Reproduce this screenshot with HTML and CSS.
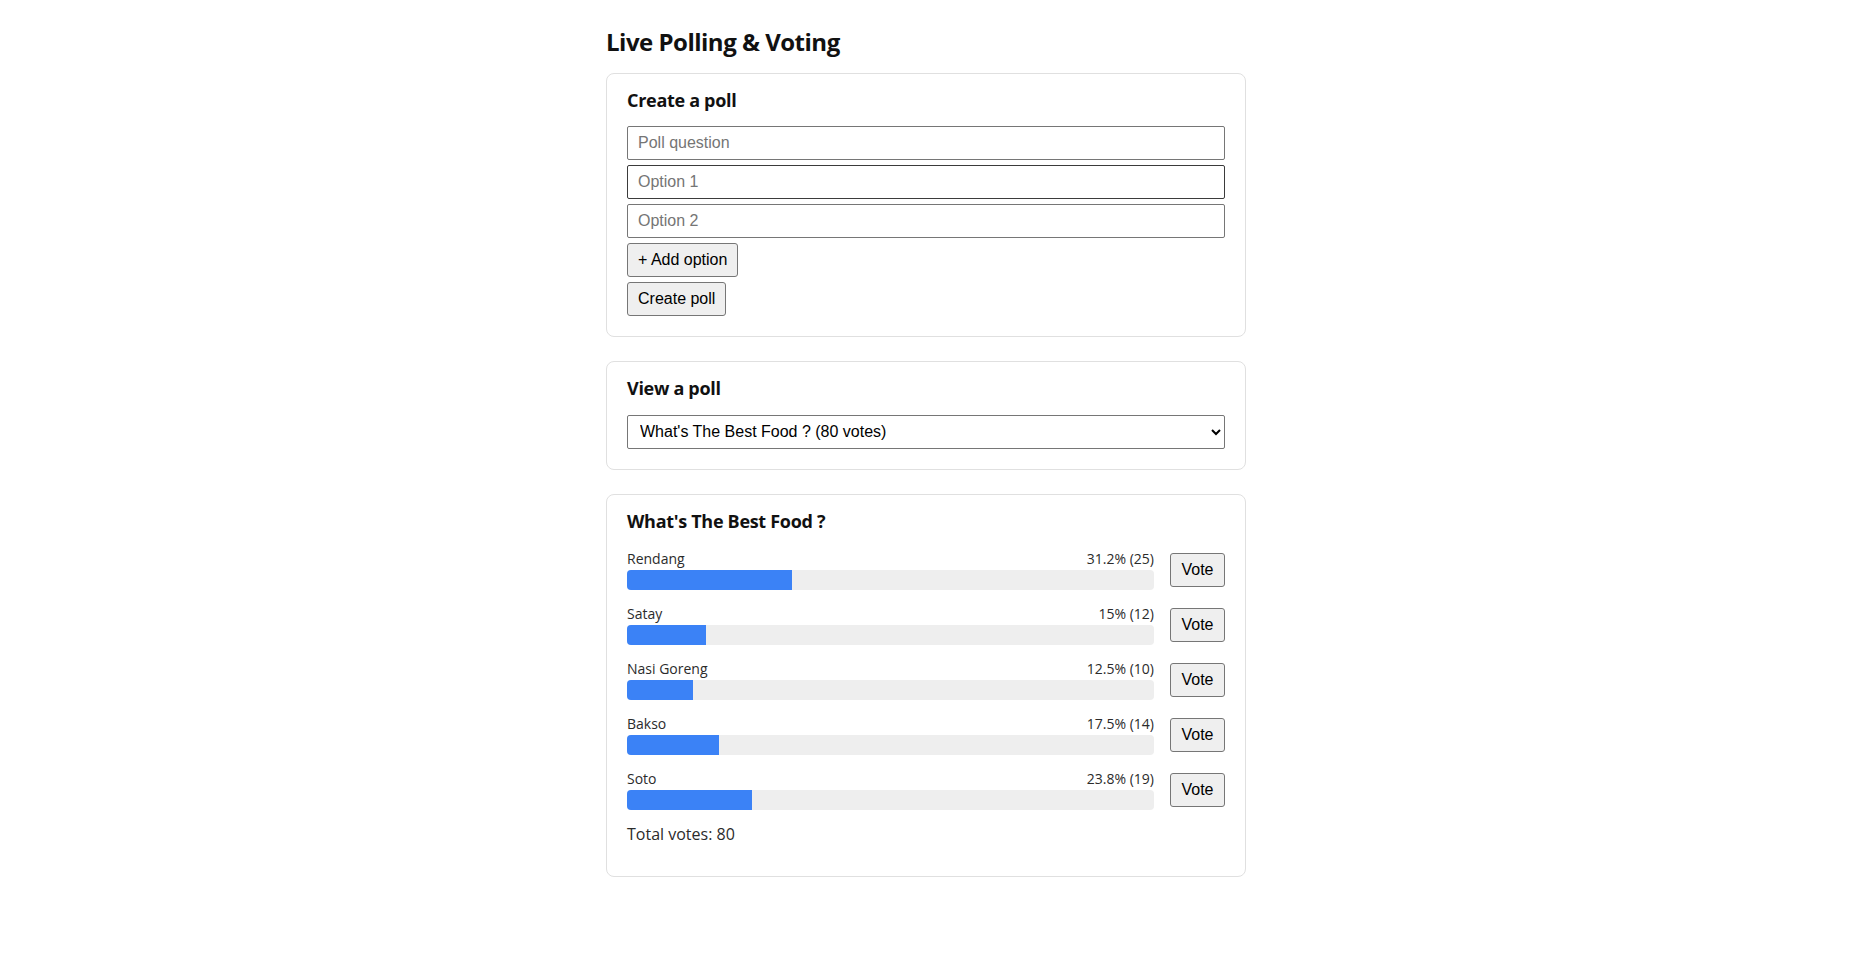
FILE: index.html
```html
<!DOCTYPE html>
<html lang="en">
<head>
<meta charset="utf-8">
<title>Live Polling &amp; Voting</title>
<link rel="stylesheet" href="styles.css">
</head>
<body>
<main class="app">
  <h1 class="app-title">Live Polling &amp; Voting</h1>

  <section class="card">
    <h2 class="card-title">Create a poll</h2>
    <div class="form-stack">
      <input class="field" type="text" placeholder="Poll question">
      <input class="field field-hover" type="text" placeholder="Option 1">
      <input class="field" type="text" placeholder="Option 2">
      <div><button class="btn" type="button">+ Add option</button></div>
      <div><button class="btn" type="button">Create poll</button></div>
    </div>
  </section>

  <section class="card">
    <h2 class="card-title">View a poll</h2>
    <select class="field select">
      <option>What's The Best Food ? (80 votes)</option>
    </select>
  </section>

  <section class="card">
    <h2 class="card-title">What's The Best Food ?</h2>
    <ul class="results">
      <li class="result-row">
        <div class="result-main">
          <div class="result-meta"><span>Rendang</span><span>31.2% (25)</span></div>
          <div class="track"><div class="fill" style="width:31.25%"></div></div>
        </div>
        <button class="btn vote-btn" type="button">Vote</button>
      </li>
      <li class="result-row">
        <div class="result-main">
          <div class="result-meta"><span>Satay</span><span>15% (12)</span></div>
          <div class="track"><div class="fill" style="width:15%"></div></div>
        </div>
        <button class="btn vote-btn" type="button">Vote</button>
      </li>
      <li class="result-row">
        <div class="result-main">
          <div class="result-meta"><span>Nasi Goreng</span><span>12.5% (10)</span></div>
          <div class="track"><div class="fill" style="width:12.5%"></div></div>
        </div>
        <button class="btn vote-btn" type="button">Vote</button>
      </li>
      <li class="result-row">
        <div class="result-main">
          <div class="result-meta"><span>Bakso</span><span>17.5% (14)</span></div>
          <div class="track"><div class="fill" style="width:17.5%"></div></div>
        </div>
        <button class="btn vote-btn" type="button">Vote</button>
      </li>
      <li class="result-row">
        <div class="result-main">
          <div class="result-meta"><span>Soto</span><span>23.8% (19)</span></div>
          <div class="track"><div class="fill" style="width:23.75%"></div></div>
        </div>
        <button class="btn vote-btn" type="button">Vote</button>
      </li>
    </ul>
    <p class="total">Total votes: 80</p>
  </section>
</main>
</body>
</html>
```

FILE: styles.css
```css
* {
  box-sizing: border-box;
}

html, body {
  background: #ffffff;
}

body {
  margin: 0;
  font-family: "Open Sans", "Noto Sans", sans-serif;
  color: #1a1a1a;
}

.app {
  max-width: 640px;
  margin: 0 auto;
  padding: 28px 0 40px;
}

.app-title {
  margin: 0 0 16px;
  font-size: 24px;
  line-height: 1.2;
  font-weight: 700;
  color: #111;
  letter-spacing: -0.5px;
}

.card {
  border: 1px solid #e0e0e0;
  border-radius: 8px;
  padding: 16px 20px 20px;
  margin-bottom: 24px;
  background: #fff;
}

.card-title {
  margin: 0 0 15px;
  font-size: 18px;
  line-height: 1.2;
  font-weight: 700;
  color: #111;
  letter-spacing: -0.3px;
}

.form-stack {
  display: flex;
  flex-direction: column;
  gap: 5px;
}

.field {
  display: block;
  width: 100%;
  height: 34px;
  padding: 0 10px;
  border: 1px solid #767676;
  border-radius: 2px;
  font-family: "Liberation Sans", Arial, sans-serif;
  font-size: 16px;
  color: #000;
  background: #fff;
}

.field::placeholder {
  color: #757575;
}

.field-hover {
  border-color: #3b3b3b;
}

.select {
  padding: 0 8px;
}

.btn {
  height: 34px;
  padding: 0 10px;
  border: 1px solid #767676;
  border-radius: 3px;
  background: #efefef;
  font-family: "Liberation Sans", Arial, sans-serif;
  font-size: 16px;
  color: #000;
  cursor: pointer;
}

.results {
  list-style: none;
  margin: 0;
  padding: 3px 0 0;
  display: flex;
  flex-direction: column;
  gap: 16px;
}

.result-row {
  display: flex;
  align-items: center;
  gap: 16px;
}

.result-main {
  flex: 1;
  min-width: 0;
}

.result-meta {
  display: flex;
  justify-content: space-between;
  font-size: 14px;
  line-height: 16px;
  color: #2b2b2b;
  margin-bottom: 3px;
}

.track {
  height: 20px;
  background: #eeeeee;
  border-radius: 4px;
  overflow: hidden;
}

.fill {
  height: 100%;
  background: #3b82f6;
}

.vote-btn {
  flex: none;
  width: 55px;
  padding: 0;
}

.total {
  margin: 15px 0 12px;
  font-size: 16px;
  line-height: 1.2;
  color: #2b2b2b;
}
```
